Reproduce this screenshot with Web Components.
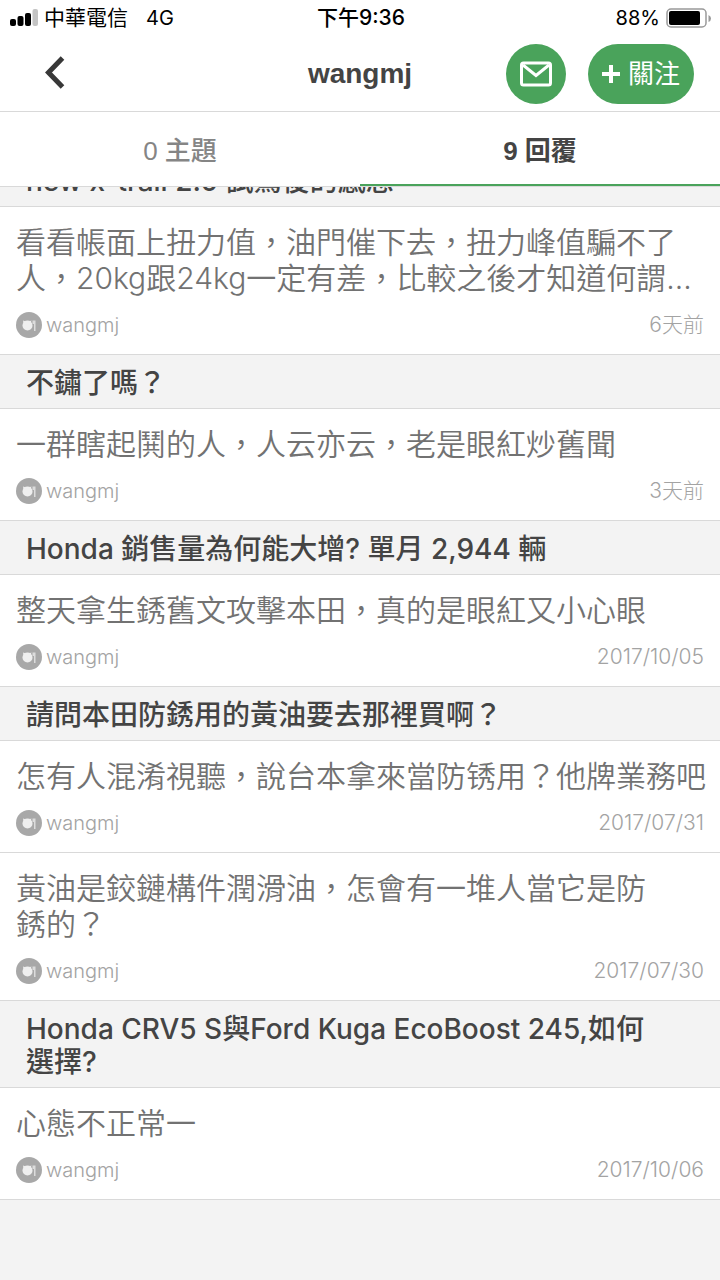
<!DOCTYPE html>
<html lang="zh-Hant">
<head>
<meta charset="utf-8">
<meta name="viewport" content="width=device-width, initial-scale=1">
<title>wangmj</title>
<style>
    :root {
        --accent: #4aa35b;
        --line: #d9d9d9;
        --surface: #f3f3f3;
        --ink: #444;
        --body: #727272;
        --muted: #a3a3a3;
        --font: Inter, "Noto Sans CJK TC", sans-serif;
        --font-light: Inter, "Noto Sans CJK TC DemiLight", "Noto Sans CJK TC", sans-serif;
        --font-cjk: "Liberation Sans", "Noto Sans CJK TC", sans-serif;
    }

    body {
        margin: 0;
        font-family: var(--font);
        color: var(--ink);
        background: var(--surface);
    }
</style>
</head>
<body>
<profile-screen>
    <status-bar slot="top" carrier="中華電信" network="4G" time="下午9:36" battery="88"></status-bar>
    <profile-header slot="top">wangmj</profile-header>
    <profile-tabs slot="top">
        <profile-tab>0 主題</profile-tab>
        <profile-tab selected>9 回覆</profile-tab>
    </profile-tabs>

    <topic-title>new x-trail 2.0 試駕後的感想</topic-title>
    <reply-item author="wangmj" date="6天前">看看帳面上扭力值，油門催下去，扭力峰值騙不了<br>人，20kg跟24kg一定有差，比較之後才知道何謂...</reply-item>
    <topic-title>不鏽了嗎？</topic-title>
    <reply-item author="wangmj" date="3天前">一群瞎起鬨的人，人云亦云，老是眼紅炒舊聞</reply-item>
    <topic-title>Honda 銷售量為何能大增? 單月 2,944 輛</topic-title>
    <reply-item author="wangmj" date="2017/10/05">整天拿生銹舊文攻擊本田，真的是眼紅又小心眼</reply-item>
    <topic-title>請問本田防銹用的黃油要去那裡買啊？</topic-title>
    <reply-item author="wangmj" date="2017/07/31">怎有人混淆視聽，說台本拿來當防锈用？他牌業務吧</reply-item>
    <reply-item author="wangmj" date="2017/07/30">黃油是鉸鏈構件潤滑油，怎會有一堆人當它是防<br>銹的？</reply-item>
    <topic-title>Honda CRV5 S與Ford Kuga EcoBoost 245,如何<br>選擇?</topic-title>
    <reply-item author="wangmj" date="2017/10/06">心態不正常一</reply-item>
</profile-screen>

<script>
class StatusBar extends HTMLElement {
    constructor() {
        super();
        this.attachShadow({ mode: "open" });
    }

    connectedCallback() {
        this.shadowRoot.innerHTML = `
            <style>
                :host {
                    display: grid;
                    grid-template-columns: 1fr auto 1fr;
                    align-items: center;
                    height: 36px;
                    padding: 0 8px 0 10px;
                    color: #000;
                    font-family: var(--font);
                    font-size: 21px;
                    line-height: 24px;
                }

                .side {
                    display: flex;
                    align-items: center;
                    gap: 6px;
                }

                .network {
                    margin-left: 12px;
                    font-size: 20px;
                }

                .time {
                    font-weight: 500;
                }

                .end {
                    justify-content: flex-end;
                    font-size: 20px;
                }

                svg {
                    display: block;
                }
            </style>

            <div class="side">
                <svg width="28" height="18" viewBox="0 0 28 18" aria-hidden="true">
                    <rect x="0" y="10" width="6" height="7" rx="2"/>
                    <rect x="7.500" y="7" width="6" height="10" rx="2"/>
                    <rect x="15" y="4" width="6" height="13" rx="2"/>
                    <rect x="22.500" y="0" width="5.500" height="17" rx="2" fill="#c4c4c4"/>
                </svg>
                <span>${this.getAttribute("carrier")}</span>
                <span class="network">${this.getAttribute("network")}</span>
            </div>
            <div class="time">${this.getAttribute("time")}</div>
            <div class="side end">
                <span>${this.getAttribute("battery")}%</span>
                <svg width="46" height="20" viewBox="0 0 46 20" aria-hidden="true">
                    <rect x="1" y="1" width="39" height="18" rx="4" fill="none" stroke="#999" stroke-width="1.500"/>
                    <rect x="3" y="3" width="31" height="14" rx="2"/>
                    <path d="M42.500 7v7q2.500-1 2.500-3.500T42.500 7z" fill="#999"/>
                </svg>
            </div>
        `;
    }
}

class ProfileHeader extends HTMLElement {
    constructor() {
        super();
        this.attachShadow({ mode: "open" });
    }

    connectedCallback() {
        this.shadowRoot.innerHTML = `
            <style>
                :host {
                    display: grid;
                    grid-template-columns: 1fr auto 1fr;
                    align-items: center;
                    height: 75px;
                    padding: 0 26px;
                    border-bottom: 1px solid var(--line);
                }

                h1 {
                    margin: 0;
                    font: bold 28px/36px var(--font-cjk);
                }

                button {
                    display: flex;
                    align-items: center;
                    justify-content: center;
                    height: 60px;
                    padding: 0;
                    border: 0;
                    color: #fff;
                    background: var(--accent);
                    font: 26px/36px var(--font);
                    cursor: pointer;
                }

                .back {
                    width: 60px;
                    color: #383838;
                    background: none;
                }

                .actions {
                    display: flex;
                    justify-content: flex-end;
                    gap: 22px;
                }

                .mail {
                    width: 60px;
                    border-radius: 50%;
                }

                .follow {
                    gap: 8px;
                    width: 106px;
                    border-radius: 30px;
                }
            </style>

            <button class="back" type="button" aria-label="返回">
                <svg width="22" height="36" viewBox="0 0 22 36" fill="none" stroke="currentColor" stroke-width="5">
                    <path d="M17.500 2L3.500 16.500L17.500 31"/>
                </svg>
            </button>
            <h1><slot></slot></h1>
            <div class="actions">
                <button class="mail" type="button" aria-label="私訊">
                    <svg width="32" height="26" viewBox="0 0 32 26" fill="none" stroke="currentColor" stroke-width="3">
                        <rect x="1.500" y="2" width="29" height="22" rx="2"/>
                        <path d="M3 4l13 10.500L29 4"/>
                    </svg>
                </button>
                <button class="follow" type="button">
                    <svg width="18" height="18" viewBox="0 0 18 18" fill="none" stroke="currentColor" stroke-width="4">
                        <path d="M9 0v18M0 9h18"/>
                    </svg>
                    <span>關注</span>
                </button>
            </div>
        `;
    }
}

class ProfileTabs extends HTMLElement {
    constructor() {
        super();
        this.attachShadow({ mode: "open" });
    }

    connectedCallback() {
        this.shadowRoot.innerHTML = `
            <style>
                :host {
                    display: grid;
                    grid-template-columns: 1fr 1fr;
                    border-bottom: 1px solid var(--line);
                }
            </style>
            <slot></slot>
        `;
    }
}

class ProfileTab extends HTMLElement {
    constructor() {
        super();
        this.attachShadow({ mode: "open" });
    }

    connectedCallback() {
        this.shadowRoot.innerHTML = `
            <style>
                :host {
                    display: block;
                }

                button {
                    width: 100%;
                    height: 74px;
                    padding: 6px 0 0;
                    border: 0;
                    border-bottom: 2px solid transparent;
                    color: #858585;
                    background: none;
                    font: 500 26px/36px var(--font-cjk);
                    cursor: pointer;
                }

                :host([selected]) button {
                    border-color: var(--accent);
                    color: var(--ink);
                    font-weight: bold;
                }
            </style>
            <button type="button" aria-pressed="${this.hasAttribute("selected")}"><slot></slot></button>
        `;
    }
}

class TopicTitle extends HTMLElement {
    constructor() {
        super();
        this.attachShadow({ mode: "open" });
    }

    connectedCallback() {
        this.shadowRoot.innerHTML = `
            <style>
                :host {
                    display: block;
                    padding: 12px 26px 8px;
                    border-bottom: 1px solid var(--line);
                    background: var(--surface);
                }

                h2 {
                    margin: 0;
                    font: 500 28px/33px var(--font);
                }
            </style>
            <h2><slot></slot></h2>
        `;
    }
}

class ReplyItem extends HTMLElement {
    constructor() {
        super();
        this.attachShadow({ mode: "open" });
    }

    connectedCallback() {
        this.shadowRoot.innerHTML = `
            <style>
                :host {
                    display: block;
                    padding: 17px 16px 16px;
                    border-bottom: 1px solid var(--line);
                    background: #fff;
                }

                p {
                    margin: 0 -8px 16px 0;
                    color: var(--body);
                    font: 350 30px/36px var(--font-light);
                }

                footer {
                    display: flex;
                    align-items: center;
                    gap: 4px;
                    color: var(--muted);
                    font: 300 20px/26px var(--font);
                }

                time {
                    margin-left: auto;
                    font-size: 21px;
                }
            </style>
            <p><slot></slot></p>
            <footer>
                <svg width="26" height="26" viewBox="0 0 26 26" aria-hidden="true">
                    <circle cx="13" cy="13" r="13" fill="#a8a8a8"/>
                    <circle cx="11.500" cy="13.500" r="5" fill="#efefef"/>
                    <path d="M7 8.500l3 1-2.500 2zM15.500 8.500l-3 1 2 1.500z" fill="#efefef"/>
                    <path d="M16.500 8.500h3V19h-1.500v-7h-1.500z" fill="#dcdcdc"/>
                </svg>
                <span>${this.getAttribute("author")}</span>
                <time>${this.getAttribute("date")}</time>
            </footer>
        `;
    }
}

class ProfileScreen extends HTMLElement {
    constructor() {
        super();
        this.attachShadow({ mode: "open" });
    }

    connectedCallback() {
        this.shadowRoot.innerHTML = `
            <style>
                :host {
                    display: flex;
                    flex-direction: column;
                    height: 100vh;
                }

                header {
                    background: #fff;
                }

                main {
                    flex: 1;
                    min-height: 0;
                    overflow-y: auto;
                    scrollbar-width: none;
                }

                .replies {
                    padding-bottom: 160px;
                }
            </style>
            <header><slot name="top"></slot></header>
            <main><div class="replies"><slot></slot></div></main>
        `;
        this.shadowRoot.querySelector("main").scrollTop = 34;
    }
}

customElements.define("status-bar", StatusBar);
customElements.define("profile-header", ProfileHeader);
customElements.define("profile-tabs", ProfileTabs);
customElements.define("profile-tab", ProfileTab);
customElements.define("topic-title", TopicTitle);
customElements.define("reply-item", ReplyItem);
customElements.define("profile-screen", ProfileScreen);
</script>
</body>
</html>
